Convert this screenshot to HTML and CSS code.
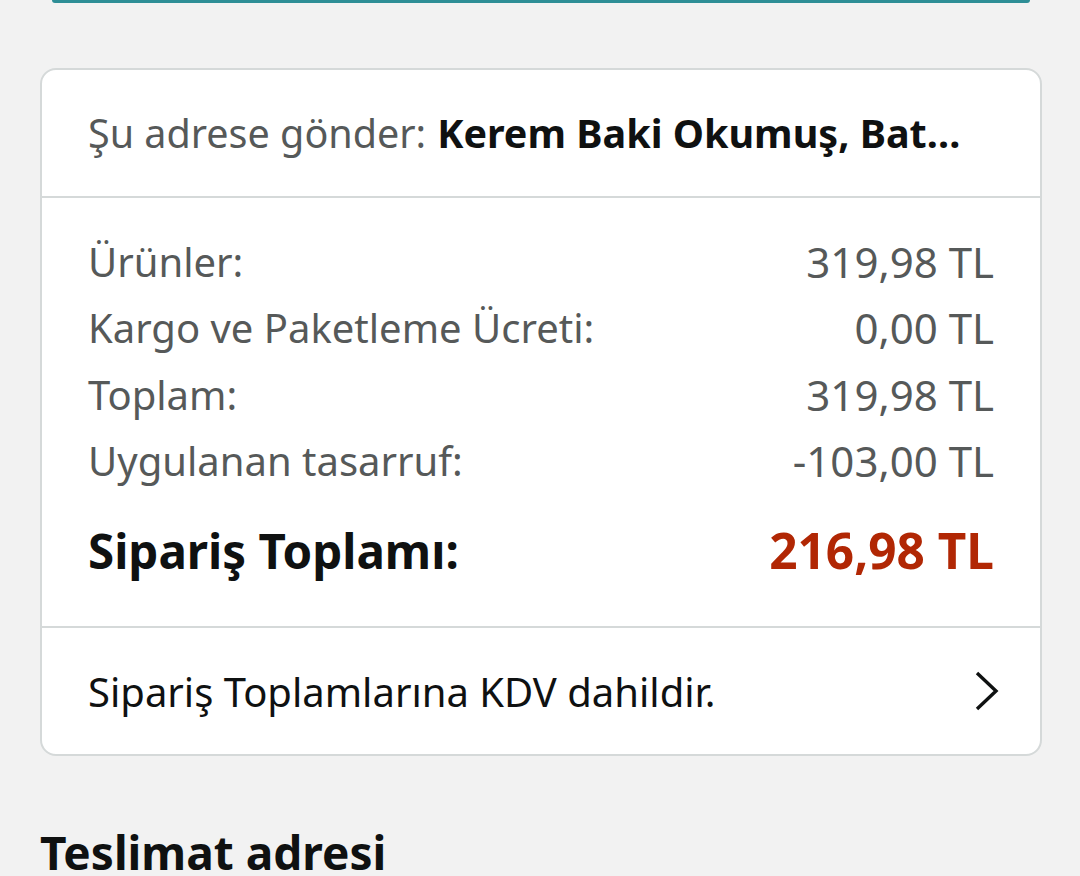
FILE: index.html
```html
<!DOCTYPE html>
<html lang="tr">
<head>
<meta charset="utf-8">
<link rel="stylesheet" href="styles.css">
</head>
<body>
<div class="top-edge"></div>
<section class="card">
  <div class="ship-to">
    <span class="ship-label">Şu adrese gönder:</span>
    <span class="ship-name">Kerem Baki Okumuş, Bat…</span>
  </div>
  <div class="summary">
    <div class="row"><span>Ürünler:</span><span class="val">319,98 TL</span></div>
    <div class="row"><span>Kargo ve Paketleme Ücreti:</span><span class="val">0,00 TL</span></div>
    <div class="row"><span>Toplam:</span><span class="val">319,98 TL</span></div>
    <div class="row"><span>Uygulanan tasarruf:</span><span class="val">-103,00 TL</span></div>
    <div class="row total"><span>Sipariş Toplamı:</span><span class="price">216,98 TL</span></div>
  </div>
  <div class="vat">
    <span>Sipariş Toplamlarına KDV dahildir.</span>
    <svg class="chev" width="26" height="40" viewBox="0 0 26 40"><path d="M3 2 L22 20 L3 38" fill="none" stroke="#0f1111" stroke-width="3.4"/></svg>
  </div>
</section>
<h2 class="section-title">Teslimat adresi</h2>
</body>
</html>
```
FILE: styles.css
```css
html, body {
  margin: 0;
  padding: 0;
  background: #f2f2f2;
  font-family: "Noto Sans", "Open Sans", sans-serif;
  color: #0f1111;
}
body {
  width: 1080px;
  height: 876px;
  overflow: hidden;
}
.top-edge {
  height: 3px;
  margin: 0 50px 0 52px;
  background: #2e8e96;
  border-radius: 0 0 4px 4px;
}
.card {
  margin: 65px 38px 0 40px;
  background: #fff;
  border: 2px solid #d5d9d9;
  border-radius: 16px;
}
.ship-to {
  height: 128px;
  box-sizing: border-box;
  padding: 0 46px;
  display: flex;
  align-items: center;
  gap: 11px;
  font-size: 39.5px;
  white-space: nowrap;
  border-bottom: 2px solid #d5d9d9;
}
.ship-label { color: #565959; }
.ship-name { font-weight: 700; color: #0f1111; }
.summary {
  padding: 30px 46px 45px;
  border-bottom: 2px solid #d5d9d9;
}
.row {
  display: flex;
  justify-content: space-between;
  align-items: center;
  height: 66.5px;
  font-size: 40px;
  color: #565959;
}
.row .val { font-size: 42px; }
.row.total {
  margin-top: 25px;
  height: 62px;
  font-size: 47.5px;
  font-weight: 700;
  color: #0f1111;
}
.price { color: #b12704; font-size: 49.5px; }
.vat {
  height: 126px;
  box-sizing: border-box;
  padding: 0 40px 0 46px;
  display: flex;
  align-items: center;
  justify-content: space-between;
  font-size: 40px;
  color: #0f1111;
}
.chev { display: block; }
.section-title {
  margin: 66px 0 0 40px;
  font-size: 46px;
  font-weight: 700;
  line-height: 60px;
  color: #0f1111;
}
```
